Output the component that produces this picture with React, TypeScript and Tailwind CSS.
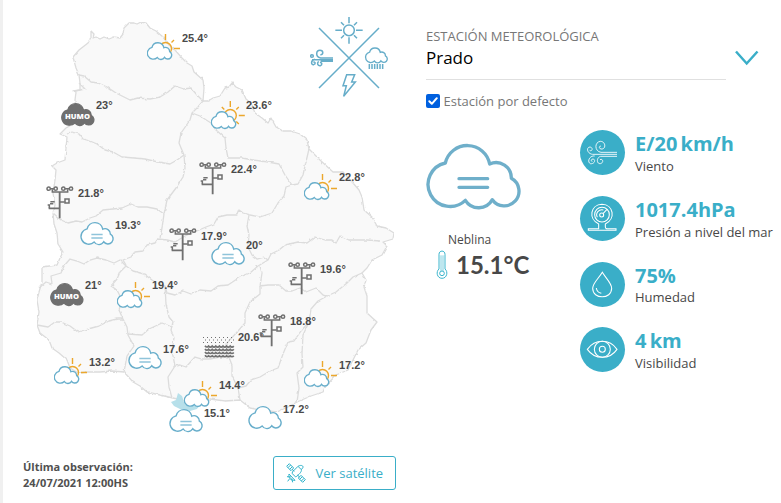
import { useState, type ReactNode } from "react";
import clsx from "clsx";

type Kind = "cloudSun" | "sunCloud" | "mist" | "cloud" | "smoke" | "station" | "waves";

type Marker = {
  kind: Kind;
  x: number;
  y: number;
  temp: string;
  tx: number;
  ty: number;
};

const markers: Marker[] = [
  { kind: "cloudSun", x: 147, y: 33, temp: "25.4°", tx: 182, ty: 33 },
  { kind: "sunCloud", x: 211, y: 101, temp: "23.6°", tx: 246, ty: 100 },
  { kind: "smoke", x: 61, y: 103, temp: "23°", tx: 96, ty: 100 },
  { kind: "station", x: 199, y: 162, temp: "22.4°", tx: 231, ty: 164 },
  { kind: "cloudSun", x: 304, y: 173, temp: "22.8°", tx: 339, ty: 172 },
  { kind: "station", x: 46, y: 186, temp: "21.8°", tx: 78, ty: 188 },
  { kind: "mist", x: 80, y: 222, temp: "19.3°", tx: 115, ty: 220 },
  { kind: "station", x: 169, y: 228, temp: "17.9°", tx: 201, ty: 231 },
  { kind: "mist", x: 211, y: 242, temp: "20°", tx: 246, ty: 240 },
  { kind: "station", x: 288, y: 262, temp: "19.6°", tx: 320, ty: 264 },
  { kind: "smoke", x: 50, y: 283, temp: "21°", tx: 85, ty: 280 },
  { kind: "cloudSun", x: 117, y: 281, temp: "19.4°", tx: 152, ty: 280 },
  { kind: "waves", x: 202, y: 336, temp: "20.6°", tx: 238, ty: 332 },
  { kind: "station", x: 258, y: 314, temp: "18.8°", tx: 290, ty: 316 },
  { kind: "mist", x: 128, y: 346, temp: "17.6°", tx: 163, ty: 344 },
  { kind: "cloudSun", x: 54, y: 357, temp: "13.2°", tx: 89, ty: 357 },
  { kind: "cloudSun", x: 304, y: 360, temp: "17.2°", tx: 339, ty: 360 },
  { kind: "cloudSun", x: 184, y: 380, temp: "14.4°", tx: 219, ty: 380 },
  { kind: "mist", x: 169, y: 409, temp: "15.1°", tx: 204, ty: 408 },
  { kind: "cloud", x: 248, y: 406, temp: "17.2°", tx: 283, ty: 404 },
];

const CLOUD =
  "M106 130 A68 68 0 0 1 239 133 A46 46 0 0 1 304 176 A44 44 0 1 1 247 240 A47 47 0 0 1 166 242 A66 66 0 1 1 106 130 Z";

const COUNTRY =
  "M91 31 L94 34 L93 38 L96 37 L100 39 L104 37 L109 39 L114 37 L120 38 L123 34 L124 28 L129 23 L134 23 L137 24 L141 22 L146 23 L150 28 L156 31 L163 37 L169 45 L175 50 L182 58 L187 63 L192 66 L194 72 L203 80 L204 88 L203 101 L208 101 L213 98 L220 96 L225 88 L229 87 L232 83 L236 87 L242 90 L246 99 L251 103 L255 113 L262 118 L268 123 L271 118 L276 127 L283 131 L291 131 L300 134 L307 140 L309 149 L320 160 L333 172 L343 172 L353 183 L359 190 L362 197 L364 210 L372 217 L377 226 L386 228 L394 233 L393 239 L383 242 L387 246 L382 255 L372 260 L367 268 L362 273 L366 280 L364 287 L367 296 L367 313 L377 322 L371 330 L366 343 L358 350 L348 370 L336 375 L325 387 L323 392 L311 396 L297 402 L290 406 L277 412 L260 410 L250 408 L240 400 L225 401 L210 399 L200 402 L190 402 L173 398 L160 395 L147 392 L140 386 L133 382 L124 372 L112 371 L100 372 L88 372 L78 373 L70 368 L67 360 L59 353 L52 348 L49 340 L40 333 L37 325 L39 312 L37 300 L39 292 L42 282 L42 267 L57 265 L60 258 L63 252 L58 244 L57 233 L54 224 L53 213 L55 205 L53 193 L55 180 L56 170 L52 166 L57 163 L65 160 L66 148 L67 137 L60 134 L66 128 L75 123 L76 112 L75 100 L76 92 L73 91 L80 90 L80 83 L79 75 L76 68 L73 57 L79 50 L88 43 L91 37 Z";

const BORDERS = [
  "M79 75 L84 76 L91 82 L98 83 L107 87 L116 93 L124 97 L130 100 L138 98 L150 99 L160 97 L168 92 L175 86 L184 89 L191 88 L197 95 L203 101 L197 108 L192 113 L190 120 L181 133 L179 143 L184 155 L185 168 L183 177 L176 188 L167 200 L164 214 L162 228 L160 238",
  "M75 91 L85 89 L79 83 M67 134 L72 132 L79 134 L83 139 L90 141 L97 144 L105 150 L113 152 L122 157 L134 158 L145 159 L158 162 L170 164 L177 160 L184 155",
  "M192 113 L200 116 L211 123 L216 130 L225 138 L226 148 L228 158 L242 158 L253 160 L268 162 L279 164 L285 175 L292 185 L298 184 L303 175 L305 166 L309 149",
  "M292 185 L286 187 L284 196 L278 203 L272 213 L260 217 L250 215 L243 213 L239 210 L237 215 L227 215 L218 217 L214 224 L206 227 L199 230 L185 236 L175 242 L167 240 L158 239 L155 243 L147 245 L143 251 L135 252 L131 257 L123 260 L126 265",
  "M53 213 L61 220 L68 223 L76 221 L82 222 L90 218 L96 216 L103 210 L113 209 L122 208 L131 204 L138 207 L147 207 L157 209 L164 214",
  "M39 288 L46 282 L52 284 L51 276 L61 273 L64 266 L70 259 L77 261 L84 264 L90 260 L97 258 L106 260 L114 263 L120 260 L126 266 L120 272 L117 279 L111 286 L117 290 L122 300 L119 310 L123 319 L127 327 L128 335 L134 346 L127 356 L124 372",
  "M126 266 L133 271 L144 274 L152 280 L157 283 L165 286 L166 304 L169 317 L173 322 L171 330 L174 338 L172 351 L175 366 L168 377 L169 387 L172 398",
  "M37 325 L48 327 L55 322 L61 322 L70 326 L78 332 L88 329 L99 326 L109 321 L117 319 L123 319 M128 334 L142 335 L149 329 L162 323 L172 327",
  "M165 286 L167 293 L175 295 L183 291 L191 294 L200 290 L211 291 L218 286 L228 285 L240 277 L250 273 L258 266 L268 260 L264 257 L257 259 L252 255 L248 247 L249 235 L247 226 L249 215",
  "M268 260 L271 254 L279 250 L285 245 L298 242 L307 243 L315 237 L325 240 L332 240 L336 243 L340 236 L349 240 L358 240 L367 240 L380 241",
  "M260 266 L262 273 L260 286 L268 285 L279 285 L286 291 L292 291 L300 288 L306 292 L316 288 L323 295 L327 296 L336 292 L347 283 L353 277 L362 273",
  "M327 296 L318 301 L311 309 L309 322 L301 331 L294 341 L288 342 L283 354 L278 368 L270 371 L260 377 L251 380 L246 386 L238 388",
  "M309 322 L303 335 L302 354 L303 367 L297 373 L299 388 L297 402",
  "M260 286 L260 294 L250 302 L245 313 L245 323 L238 331 L227 343 L227 352 L232 365 L232 376 L238 388 L240 400 M175 366 L180 365 L186 367 L195 357 L202 359 L210 359 L220 357 L228 358",
];

function Sun({ x, y, full }: { x: number; y: number; full?: boolean }) {
  return (
    <g stroke="#eca72c" strokeWidth="1.4" fill="none" transform={`translate(${x} ${y})`}>
      <circle r="6" />
      <path d="M0 -14.5V-8.5M8.5 0H14.5M6 -6L8.5 -8.5" />
      {full && <path d="M-6 -6L-8.5 -8.5M6 6L8.5 8.5" />}
    </g>
  );
}

function SmallCloud({ y }: { y: number }) {
  return (
    <svg x="0" y={y} width="25.5" height="18.5" viewBox="50 67 286 206" preserveAspectRatio="none" overflow="visible">
      <path d={CLOUD} fill="#fff" stroke="#68aecb" strokeWidth="15" />
    </svg>
  );
}

function Station() {
  return (
    <svg width="28" height="33" viewBox="0 0 84 99" fill="none" stroke="#707070">
      <g strokeWidth="4.6">
        <circle cx="8" cy="8" r="5" />
        <circle cx="29" cy="8" r="5" />
        <circle cx="52" cy="8" r="5" />
        <circle cx="75" cy="8" r="5" />
        <path d="M13 8H24M57 8H70" />
        <path d="M19 10V18H65V10" />
        <path d="M41 48H56M10 67V57H5M26 47H13M22 53H12" />
        <path d="M57 39H69V51H57Z" />
      </g>
      <path d="M41 18V97M8 67H41" strokeWidth="5.5" />
    </svg>
  );
}

function MarkerIcon({ kind }: { kind: Kind }) {
  switch (kind) {
    case "cloudSun":
      return (
        <svg width="34" height="28" viewBox="0 0 34 28">
          <Sun x={18.5} y={15.5} />
          <SmallCloud y={8.8} />
        </svg>
      );
    case "sunCloud":
      return (
        <svg width="34" height="30" viewBox="0 0 34 30">
          <Sun x={19.3} y={14.5} full />
          <SmallCloud y={9.8} />
        </svg>
      );
    case "mist":
    case "cloud":
      return (
        <svg width="34" height="24" viewBox="46 72 288 204" overflow="visible">
          <path d={CLOUD} fill="#fff" stroke="#68aecb" strokeWidth="12" />
          {kind === "mist" && (
            <path d="M142 179H238M142 208H238" stroke="#8fc4da" strokeWidth="13" />
          )}
        </svg>
      );
    case "smoke":
      return (
        <svg width="34" height="24" viewBox="0 0 34 24">
          <svg width="34" height="24" viewBox="48 72 288 204" overflow="visible">
            <path d={CLOUD} fill="#6f6f6f" stroke="#6f6f6f" strokeWidth="11" />
          </svg>
          <text
            x="4"
            y="15.8"
            fill="#fff"
            textLength="25"
            lengthAdjust="spacingAndGlyphs"
            className="font-['Open_Sans',sans-serif] text-[7.5px] font-extrabold"
          >
            HUMO
          </text>
        </svg>
      );
    case "station":
      return <Station />;
    case "waves":
      return (
        <svg width="35" height="23" viewBox="0 0 35 23" fill="none" stroke="#707070">
          <path d="M1 1.5H33M1 6.5H33" strokeDasharray="1 3" />
          <path d="M3 4H33" strokeDasharray="1 3" />
          {[10.5, 13.7, 16.9, 20.1].map((y) => (
            <path
              key={y}
              d={`M3 ${y - 0.8}q1.8 2.4 3.6 0.4q1.8 2 3.6 0q1.8 2 3.6 0q1.8 2 3.6 0q1.8 2 3.6 0q1.8 2 3.6 0q1.8 2 3.6 0q1.8 2 3.6 0`}
              strokeWidth="1.7"
            />
          ))}
        </svg>
      );
  }
}

function Compass() {
  return (
    <svg
      className="absolute left-[310px] top-[16px]"
      width="79"
      height="82"
      viewBox="330 48 237 246"
      fill="none"
      stroke="#66adc9"
      strokeWidth="4.5"
    >
      <path d="M357 84L537 264M537 84L357 264" />
      <circle cx="447" cy="91" r="16" />
      <path d="M447 51V70M447 112V131M406 91H426M468 91H488M423 67L432 76M471 67L462 76M423 115L432 106M471 115L462 106" />
      <svg x="495" y="141" width="69" height="49" viewBox="48 66 288 204" overflow="visible">
        <path d={CLOUD} strokeWidth="17" />
      </svg>
      <path d="M508 192V207M516 192V207M524 192V207M532 192V207M540 192V207M548 192V207" />
      <path d="M440 224H464L455 246H466L431 289L439 257H429Z" />
      <path d="M399 174H362C345 170 348 151 360 151C371 151 371 165 361 164M399 179H336M399 184H362M356 184C349 190 354 198 361 197C368 195 366 186 360 188M345 178C330 182 334 196 341 194C349 191 345 184 340 187" />
      <circle cx="336" cy="168" r="4" />
    </svg>
  );
}

function WeatherMap() {
  return (
    <div className="relative h-[445px] shrink-0">
      <svg className="absolute left-[-3px] top-0" width="420" height="445" viewBox="0 0 420 445">
        <defs>
          <filter id="coast" x="0" y="0" width="100%" height="100%" colorInterpolationFilters="sRGB">
            <feTurbulence type="fractalNoise" baseFrequency="0.25" numOctaves="1" seed="4" />
            <feDisplacementMap in="SourceGraphic" scale="3" xChannelSelector="R" yChannelSelector="G" />
          </filter>
        </defs>
        <g filter="url(#coast)" stroke="#dcdcdc" strokeWidth="1.3" strokeLinejoin="round">
          <path d={COUNTRY} fill="#f9f9f9" />
          {BORDERS.map((d) => (
            <path key={d} d={d} fill="none" />
          ))}
        </g>
        <path
          d="M171 402L176 400L178 393L182 396L184 402L192 405L200 404L197 409L190 411L180 409L174 406Z"
          fill="#b7e0ea"
        />
      </svg>

      <div className="absolute left-[-3px] top-0">
        <Compass />
        {markers.map((m) => (
          <div key={`${m.x}-${m.y}`}>
            <div className="absolute" style={{ left: m.x, top: m.y }}>
              <MarkerIcon kind={m.kind} />
            </div>
            <span
              className="absolute font-['Liberation_Sans',Arial,sans-serif] text-[11px] font-bold leading-none text-[#4a4a4a]"
              style={{ left: m.tx, top: m.ty }}
            >
              {m.temp}
            </span>
          </div>
        ))}
      </div>
    </div>
  );
}

function Satellite() {
  return (
    <svg width="20" height="20" viewBox="0 0 60 60" fill="none" stroke="#2fb3cb" strokeWidth="3">
      <path d="M2 10L10 2L23 15L15 23ZM6 14L14 6M11 19L19 11" />
      <path d="M37 45L45 37L58 50L50 58ZM41 49L49 41M46 54L54 46" />
      <path d="M19 27L36 10L46 20C48 26 38 36 29 42L19 32ZM36 10C42 6 52 6 51 13L46 20M18 19L25 25M34 36L41 42" />
      <path d="M9 33C7 45 14 53 27 52L9 33ZM15 42L3 41M17 46L20 58M11 47L5 55" />
    </svg>
  );
}

function Stat({ value, label, children }: { value: string; label: string; children: ReactNode }) {
  return (
    <li className="flex h-[65.8px] items-start gap-[10px]">
      <svg className="h-[45px] w-[45px] shrink-0 rounded-full bg-[#3aaec8]" viewBox="0 0 135 135" fill="none" stroke="#fff" strokeWidth="3.2">
        {children}
      </svg>
      <div className="whitespace-nowrap">
        <p className="text-[20px] font-bold leading-[27.5px] text-[#3aaec8] [word-spacing:-2px]">{value}</p>
        <p className="mt-[-0.7px] text-[13px] leading-[18px] text-[#484848]">{label}</p>
      </div>
    </li>
  );
}

export default function App() {
  const [isDefault, setIsDefault] = useState(true);

  return (
    <div className="flex h-[503px] w-[781px] overflow-hidden bg-white font-['Open_Sans',sans-serif] text-[#484848]">
      <div className="w-[3px] shrink-0 bg-[#f0f0f0]" />

      {/* Map */}
      <section className="flex w-[423px] shrink-0 flex-col">
        <WeatherMap />
        <div className="flex items-start justify-between pl-[20px] pr-[30px] pt-[11px]">
          <p className="pt-[3px] text-[11px] font-bold leading-4 text-[#505050]">
            Última observación:
            <br />
            24/07/2021 12:00HS
          </p>
          <button className="flex h-[34px] w-[123px] items-center gap-[9.5px] rounded-[3px] border border-[#3aaec8] pl-3 text-[13px] text-[#3aaec8]">
            <Satellite />
            <span className="pt-[2px]">Ver satélite</span>
          </button>
        </div>
      </section>

      {/* Selected station */}
      <section className="flex-1 pt-[27px]">
        <div className="flex items-start gap-[9px]">
          <div className="h-[53px] w-[300px] border-b border-[#e0e0e0]">
            <p className="text-[13px] leading-[18px] text-[#777]">ESTACIÓN METEOROLÓGICA</p>
            <p className="text-[17px] leading-[26px] text-black">Prado</p>
          </div>
          <svg className="mt-[23px]" width="24" height="16" viewBox="0 0 24 16" fill="none" stroke="#3aaec8" strokeWidth="2.5">
            <path d="M1 1.5L11.7 13.5L22.5 1.5" />
          </svg>
        </div>

        <button
          role="checkbox"
          aria-checked={isDefault}
          onClick={() => setIsDefault(!isDefault)}
          className="mt-[12px] flex items-center gap-[3.5px] text-[13px] leading-[18px] text-[#777]"
        >
          <span className={clsx("h-[14px] w-[14px] rounded-[2px]", isDefault ? "bg-[#0060df]" : "border border-gray-400")}>
            {isDefault && (
              <svg viewBox="0 0 14 14" fill="none" stroke="#fff" strokeWidth="2" strokeLinecap="round" strokeLinejoin="round">
                <path d="M3.3 7.3L5.8 9.8L10.8 4.2" />
              </svg>
            )}
          </span>
          Estación por defecto
        </button>

        <div className="mt-[20px] flex">
          <div className="w-[154px] pt-[12px]">
            <svg width="96" height="69" viewBox="48 67 288 207" fill="none" stroke="#6fafca" strokeWidth="10" strokeLinejoin="round">
              <path d={CLOUD} />
              <path d="M147 177H233M147 203H233" strokeLinecap="round" />
            </svg>
            <p className="mt-[21px] pl-[22px] text-[12px] leading-[16px]">Neblina</p>
            <div className="flex items-center gap-[8px] pl-[10px] pt-[2px]">
              <svg width="12" height="30" viewBox="0 0 36 90" fill="none" stroke="#3ab5cd" strokeWidth="3">
                <path d="M9 57V13C9 0 27 0 27 13V57C37 65 33 85 18 85C3 85 -1 65 9 57Z" />
                <circle cx="18" cy="70" r="7" />
                <path d="M15 63V16M21 63V16" strokeWidth="2" />
              </svg>
              <span className="font-['Lato',sans-serif] text-[24px] font-bold leading-[30px] text-[#484848]">15.1°C</span>
            </div>
          </div>

          <ul>
            <Stat value="E/20 km/h" label="Viento">
              <path d="M111 67H63C43 64 43 36 61 34C78 34 79 59 63 57C55 55 58 46 63 49M111 73H38C22 72 17 52 30 51C41 53 36 66 29 61M111 79H62C49 82 49 102 61 101C73 98 68 84 60 89M44 78C29 76 20 95 31 101C44 103 48 88 39 87C32 87 33 95 37 94" strokeWidth="2.6" />
            </Stat>
            <Stat value="1017.4hPa" label="Presión a nivel del mar">
              <path d="M56 98V84C24 69 31 26 66 25C101 26 108 69 76 84V92C76 100 82 98 86 98H108V103H25V98Z" />
              <circle cx="66" cy="56" r="22" />
              <circle cx="65" cy="57" r="6" />
              <path d="M69 53L81 40M52 64C45 50 57 39 70 42" />
            </Stat>
            <Stat value="75%" label="Humedad">
              <path d="M67 31C58 47 38 63 38 79C38 113 95 113 95 79C95 63 76 47 67 31ZM49 78C50 87 55 92 64 94" />
            </Stat>
            <Stat value="4 km" label="Visibilidad">
              <path d="M22 67C45 35 89 35 111 67C89 99 45 99 22 67Z" />
              <circle cx="67" cy="67" r="24" />
              <circle cx="67" cy="67" r="9" />
            </Stat>
          </ul>
        </div>
      </section>
    </div>
  );
}
